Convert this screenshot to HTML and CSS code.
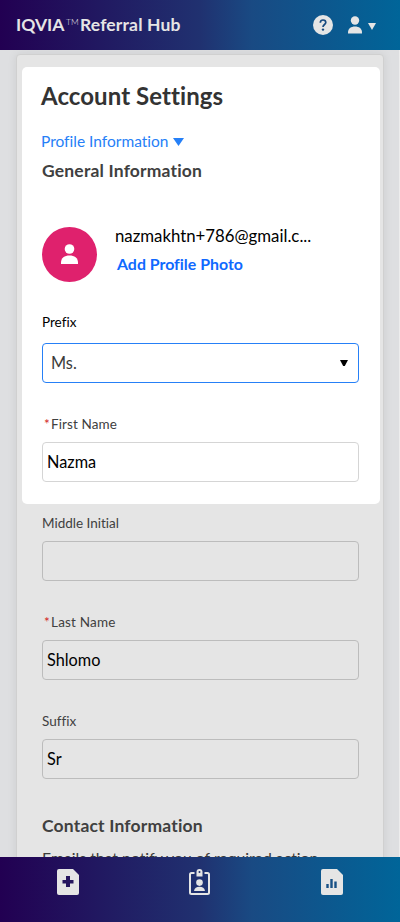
FILE: index.html
```html
<!DOCTYPE html>
<html lang="en">
<head>
<meta charset="utf-8">
<title>Account Settings</title>
<link rel="stylesheet" href="styles.css">
</head>
<body>
<div class="app">
  <header class="topbar">
    <div class="brand"><span class="brand-name">IQVIA</span><span class="tm">TM</span><span class="brand-product">Referral Hub</span></div>
    <div class="tools">
      <svg class="help" width="20" height="20" viewBox="0 0 20 20"><circle cx="10" cy="10" r="10" fill="#e5e5e5"/><path d="M7.300 7.700C7.300 5.900 8.500 5 10 5s2.800.9 2.800 2.500C12.800 9.600 10 9.400 10 12" fill="none" stroke="#164a80" stroke-width="1.700"/><circle cx="10" cy="14.600" r="1.200" fill="#164a80"/></svg>
      <svg class="user" width="14" height="18" viewBox="0 0 14 18" fill="#e5e5e5"><circle cx="7" cy="4.500" r="4.200"/><path d="M0 17.500v-1c0-4 3-6 7-6s7 2 7 6v1z"/></svg>
      <svg class="caret" width="8" height="7" viewBox="0 0 8 7"><path d="M0 0h8L4 7z" fill="#e5e5e5"/></svg>
    </div>
  </header>
  <main class="page">
    <div class="card">
      <section class="spotlight">
        <h1>Account Settings</h1>
        <a class="section-link"><span>Profile Information</span><svg width="11" height="8" viewBox="0 0 11 8"><path d="M0 0h11L5.500 8z" fill="#2680f7"/></svg></a>
        <h2>General Information</h2>
        <div class="profile">
          <div class="avatar"><svg width="17" height="20" viewBox="0 0 17 20" fill="#fff"><circle cx="8.500" cy="5" r="4.800"/><path d="M0 20v-1.500c0-4.500 3.500-7 8.500-7s8.500 2.500 8.500 7V20z"/></svg></div>
          <div class="identity">
            <div class="email">nazmakhtn+786@gmail.c...</div>
            <a class="photo">Add Profile Photo</a>
          </div>
        </div>
        <div class="field prefix">
          <label>Prefix</label>
          <div class="control select"><span>Ms.</span><svg width="8" height="6" viewBox="0 0 8 6"><path d="M0 0h8L4.800 6H3.200z"/></svg></div>
        </div>
        <div class="field">
          <label class="req"><i>*</i><span>First Name</span></label>
          <div class="control"><span>Nazma</span></div>
        </div>
      </section>
      <section class="dimmed">
        <div class="field">
          <label>Middle Initial</label>
          <div class="control"></div>
        </div>
        <div class="field">
          <label class="req"><i>*</i><span class="last">Last Name</span></label>
          <div class="control"><span>Shlomo</span></div>
        </div>
        <div class="field">
          <label>Suffix</label>
          <div class="control"><span>Sr</span></div>
        </div>
        <h2 class="contact">Contact Information</h2>
        <p>Emails that notify you of required action</p>
      </section>
    </div>
  </main>
  <nav class="bottombar">
    <svg width="22" height="26" viewBox="0 0 22 26"><path d="M2 0h14l6 6v18a2 2 0 0 1-2 2H2a2 2 0 0 1-2-2V2a2 2 0 0 1 2-2z" fill="#e5e5e5"/><path d="M9 7h4v4h3.500v3.500H13V18H9v-3.500H5.500V11H9z" fill="#26165f"/></svg>
    <svg width="22" height="26" viewBox="0 0 22 26"><path d="M5.500 4H2.500Q1 4 1 5.500v18Q1 25 2.500 25h16q1.500 0 1.500-1.500v-18Q20 4 18.500 4H15.500" fill="none" stroke="#e5e5e5" stroke-width="2"/><path d="M7.500 3a3 3 0 0 1 6 0v4.500h-6z" fill="#e5e5e5"/><circle cx="10.500" cy="3" r="1" fill="#203170"/><circle cx="10.500" cy="13.600" r="3.300" fill="#e5e5e5"/><path d="M5 22c.4-3.200 2.500-4.300 5.500-4.300s5.100 1.100 5.500 4.300z" fill="#e5e5e5"/></svg>
    <svg width="22" height="26" viewBox="0 0 22 26"><path d="M2 0h14l6 6v18a2 2 0 0 1-2 2H2a2 2 0 0 1-2-2V2a2 2 0 0 1 2-2z" fill="#e5e5e5"/><path d="M5.300 15h2.400v4H5.300zM9.300 10h2.400v9H9.300zM13.300 12.500h2.400V19h-2.400z" fill="#175085"/></svg>
  </nav>
</div>
</body>
</html>
```

FILE: styles.css
```css
* { box-sizing: border-box; }
body { margin: 0; font-family: Lato, "Open Sans", sans-serif; font-variant-ligatures: none; color: #3b3b3b; }
.app { height: 922px; display: flex; flex-direction: column; overflow: hidden; background: #dedfe1; }
.topbar, .bottombar { flex: none; background: linear-gradient(90deg, #220052 0%, #203170 50%, #194a83 63%, #006599 100%); display: flex; }
.topbar { height: 50px; align-items: center; justify-content: space-between; padding: 0 24px 0 16px; color: #e5e5e5; }
.brand { display: flex; font-size: 17.500px; font-weight: 700; line-height: 22px; white-space: nowrap; }
.brand-name { width: 50px; }
.tm { width: 14px; font-size: 8.500px; font-weight: 300; line-height: 16px; }
.brand-product { letter-spacing: .15px; }
.tools { display: flex; align-items: center; }
.user { margin-left: 15px; }
.caret { margin: 3px 0 0 6px; }
.page { flex: 1; min-height: 0; overflow: hidden; padding: 4px 16px 0; border-right: 1px solid #ededed; }
.card { width: 368px; height: 820px; padding: 12px 3px 0 5px; border: 1px solid #d0d0d0; border-radius: 4px; background: #e5e5e5; box-shadow: 0 0 10px rgba(0, 0, 0, .08); }
.spotlight { height: 437px; padding: 14px 21px 0 20px; background: #fff; border-radius: 5px; }
h1 { margin: 0 0 0 -1px; font-size: 24px; letter-spacing: .07px; line-height: 30px; font-weight: 700; color: #333; white-space: nowrap; }
.section-link { display: flex; align-items: center; gap: 4px; margin: 20px 0 0 -1px; color: #2680f7; font-size: 15.500px; line-height: 21px; }
.section-link svg { margin-top: 1px; }
h2 { margin: 8px 0 0; font-size: 17.500px; letter-spacing: .18px; font-weight: 700; line-height: 21px; color: #404040; white-space: nowrap; }
.profile { display: flex; margin-top: 46px; }
.avatar { width: 55px; height: 55px; border-radius: 50%; background: #df216d; display: flex; align-items: center; justify-content: center; }
.avatar svg { margin-top: -2px; }
.identity { margin: -2px 0 0 18px; white-space: nowrap; }
.email { color: #000; font-size: 16.800px; line-height: 22px; }
.photo { display: block; margin: 6px 0 0 2px; color: #0f69ff; font-size: 15.900px; font-weight: 700; line-height: 22px; }
.field { height: 99px; }
label { display: flex; height: 20px; font-size: 13.500px; line-height: 20px; color: #404040; white-space: nowrap; }
.req { padding-left: 2px; gap: 2px; letter-spacing: .1px; }
.req i { width: 5px; font-style: normal; color: #d22222; }
.last { letter-spacing: .2px; }
.control { display: flex; align-items: center; height: 40px; margin-top: 8px; padding: 0 4px 2px; border: 1px solid #d5d5d5; border-radius: 4px; color: #000; font-size: 16.300px; }
.prefix { height: 102px; margin-top: 30px; }
.prefix label { color: #000; }
.prefix .control { margin-top: 11px; }
.select { justify-content: space-between; padding: 0 10px 1px 8px; border-color: #2680f7; color: #3b3b3b; }
.select svg { fill: #000; margin-top: 1px; }
.dimmed { padding: 9px 21px 0 20px; }
.dimmed .control { border-color: #bcbcbc; }
.contact { margin-top: 5px; }
.dimmed p { margin: 12px 0 0; font-size: 15.800px; line-height: 20px; white-space: nowrap; }
.bottombar { height: 65px; padding: 12px 57px 0; justify-content: space-between; align-items: flex-start; }
```
